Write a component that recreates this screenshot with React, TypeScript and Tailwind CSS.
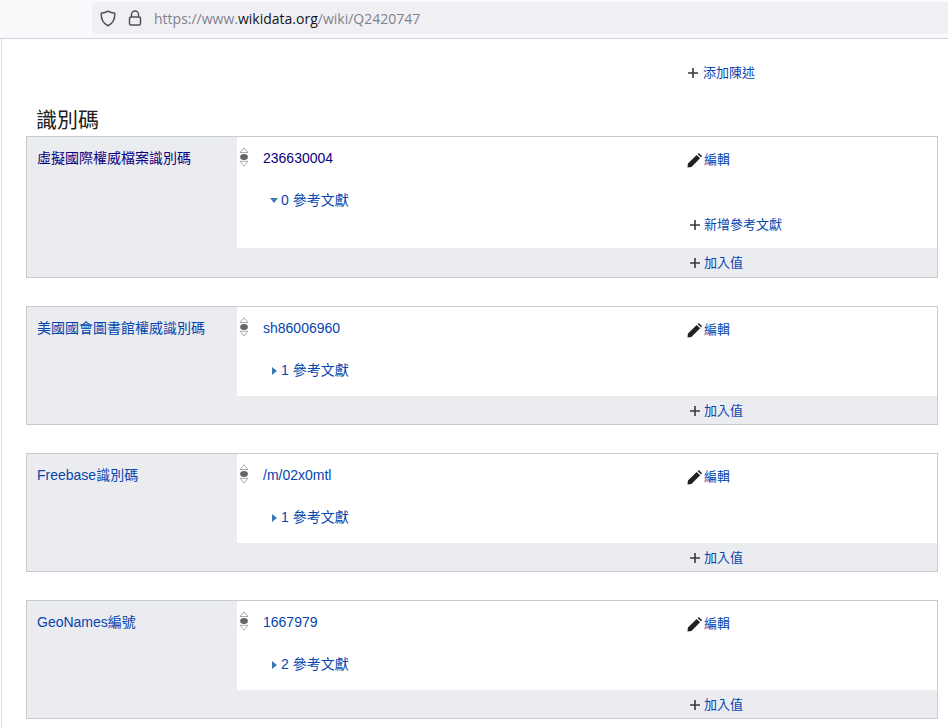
const FONT = "font-['Liberation_Sans','Noto_Sans_CJK_TC',sans-serif]";

type Claim = {
  prop: string;
  value: string;
  refs: number;
  visited?: boolean;
  valueVisited?: boolean;
  open?: boolean;
};

const CLAIMS: Claim[] = [
  { prop: '虛擬國際權威檔案識別碼', value: '236630004', refs: 0, visited: true, valueVisited: true, open: true },
  { prop: '美國國會圖書館權威識別碼', value: 'sh86006960', refs: 1 },
  { prop: 'Freebase識別碼', value: '/m/02x0mtl', refs: 1 },
  { prop: 'GeoNames編號', value: '1667979', refs: 2 },
];

function Plus() {
  return (
    <svg width="10" height="10" viewBox="0 0 10 10" className="shrink-0" aria-hidden="true">
      <path d="M4.200 0h1.600v4.200H10v1.600H5.800V10H4.200V5.800H0V4.200h4.200z" fill="#3a3a3a" />
    </svg>
  );
}

function Pencil() {
  return (
    <svg width="15" height="15" viewBox="0 0 16 16" className="shrink-0" aria-hidden="true">
      <path d="M0.500 15.500L1 11.300 10.300 2l3.700 3.700L4.700 15zM11.300 1l.7-.6c.4-.3.900-.3 1.200 0l2.400 2.400c.3.3.3.800 0 1.200l-.6.700z" fill="#202122" />
    </svg>
  );
}

function RankIcon() {
  return (
    <svg width="10" height="21" viewBox="0 0 10 21" className="shrink-0" aria-hidden="true">
      <path d="M1 5.500L5 .8l4 4.700z" fill="#fff" stroke="#8f969e" strokeWidth="0.800" />
      <ellipse cx="5" cy="10" rx="3.900" ry="2.900" fill="#666" />
      <path d="M1 14.300h8L5 19z" fill="#fff" stroke="#8f969e" strokeWidth="0.800" />
    </svg>
  );
}

function ClaimBlock({ claim }: { claim: Claim }) {
  return (
    <div className="flex border border-[#c8ccd1] bg-[#eaecf0]">
      <div className={`w-[210px] shrink-0 pl-[10px] pt-[11px] text-[14px] leading-5 ${claim.visited ? 'text-[#0b0080]' : 'text-[#0645ad]'}`}>
        {claim.prop}
      </div>
      <div className="flex-1 flex flex-col">
        <div className="bg-white">
          <div className="flex pt-[10px]">
            <div className="w-[26px] pl-[2px]">
              <RankIcon />
            </div>
            <div className={`w-[424px] pt-px text-[14px] leading-5 ${claim.valueVisited ? 'text-[#0b0080]' : 'text-[#0645ad]'}`}>
              {claim.value}
            </div>
            <div className="flex items-center gap-[2px] h-[22px] pt-[4px] text-[13px] text-[#0645ad]">
              <Pencil />
              編輯
            </div>
          </div>
          <div className={`flex items-center h-5 mt-[21px] text-[14px] text-[#0645ad] ${claim.open ? 'pl-[33px]' : 'pl-[35px]'}`}>
            {claim.open ? (
              <svg width="8" height="5" viewBox="0 0 8 5" className="mr-[3px] mt-px" aria-hidden="true">
                <path d="M0 0h8L4 5z" fill="#3a78b5" />
              </svg>
            ) : (
              <svg width="5" height="8" viewBox="0 0 5 8" className="mr-[4px] mt-px" aria-hidden="true">
                <path d="M0 0l5 4-5 4z" fill="#3a78b5" />
              </svg>
            )}
            {claim.refs} 參考文獻
          </div>
          {claim.open ? (
            <div className="flex items-center gap-[4px] h-5 mt-[5px] mb-[13px] pl-[453px] text-[13px] text-[#0645ad]">
              <Plus />
              新增參考文獻
            </div>
          ) : (
            <div className="h-4" />
          )}
        </div>
        <div className={`flex items-center gap-[4px] pt-px pl-[453px] text-[13px] text-[#0645ad] ${claim.open ? 'h-[29px]' : 'h-[28px]'}`}>
          <Plus />
          加入值
        </div>
      </div>
    </div>
  );
}

export default function App() {
  return (
    <div className={`${FONT} h-[728px] w-[948px] overflow-hidden bg-white`}>
      {/* browser toolbar */}
      <div className="h-[39px] bg-[#f9f9fb] border-b border-[#cfcfd8] pl-[92px] pt-[2px]">
        <div className="h-8 bg-[#f0f0f4] rounded-l-[4px] flex items-center pl-[8px] font-['Open_Sans',sans-serif] text-[14px]">
          <svg width="16" height="17" viewBox="0 0 16 17" fill="none" aria-hidden="true">
            <path d="M8 1.200c2 1.300 4.200 1.900 6.800 2 .2 5.700-2 10.300-6.800 12.600C3.200 13.500 1 8.900 1.200 3.200c2.600-.1 4.800-.7 6.800-2z" stroke="#50505c" strokeWidth="1.500" strokeLinejoin="round" />
          </svg>
          <svg width="14" height="16" viewBox="0 0 14 16" fill="none" className="ml-[12px]" aria-hidden="true">
            <path d="M3.500 7V4.500a3.500 3.500 0 0 1 7 0V7" stroke="#50505c" strokeWidth="1.500" />
            <rect x="1.500" y="7" width="11" height="8" rx="1.500" stroke="#50505c" strokeWidth="1.500" />
          </svg>
          <span className="ml-[12px] text-[#80808e]">
            https://www.<span className="text-[#15141a]">wikidata.org</span>/wiki/Q2420747
          </span>
        </div>
      </div>

      {/* page */}
      <div className="ml-px border-l border-[#c5dff5] h-full pt-[24px] pl-[24px] pr-[10px]">
        <div className="flex items-center gap-[5px] h-5 pl-[662px] text-[13px] text-[#0645ad]">
          <Plus />
          添加陳述
        </div>
        <h2 className="pl-[10px] mt-[24px] h-[29px] text-[21px] leading-[26px] text-[#202122]">識別碼</h2>
        <div className="flex flex-col gap-[28px]">
          {CLAIMS.map((claim) => (
            <ClaimBlock key={claim.prop} claim={claim} />
          ))}
        </div>
      </div>
    </div>
  );
}
